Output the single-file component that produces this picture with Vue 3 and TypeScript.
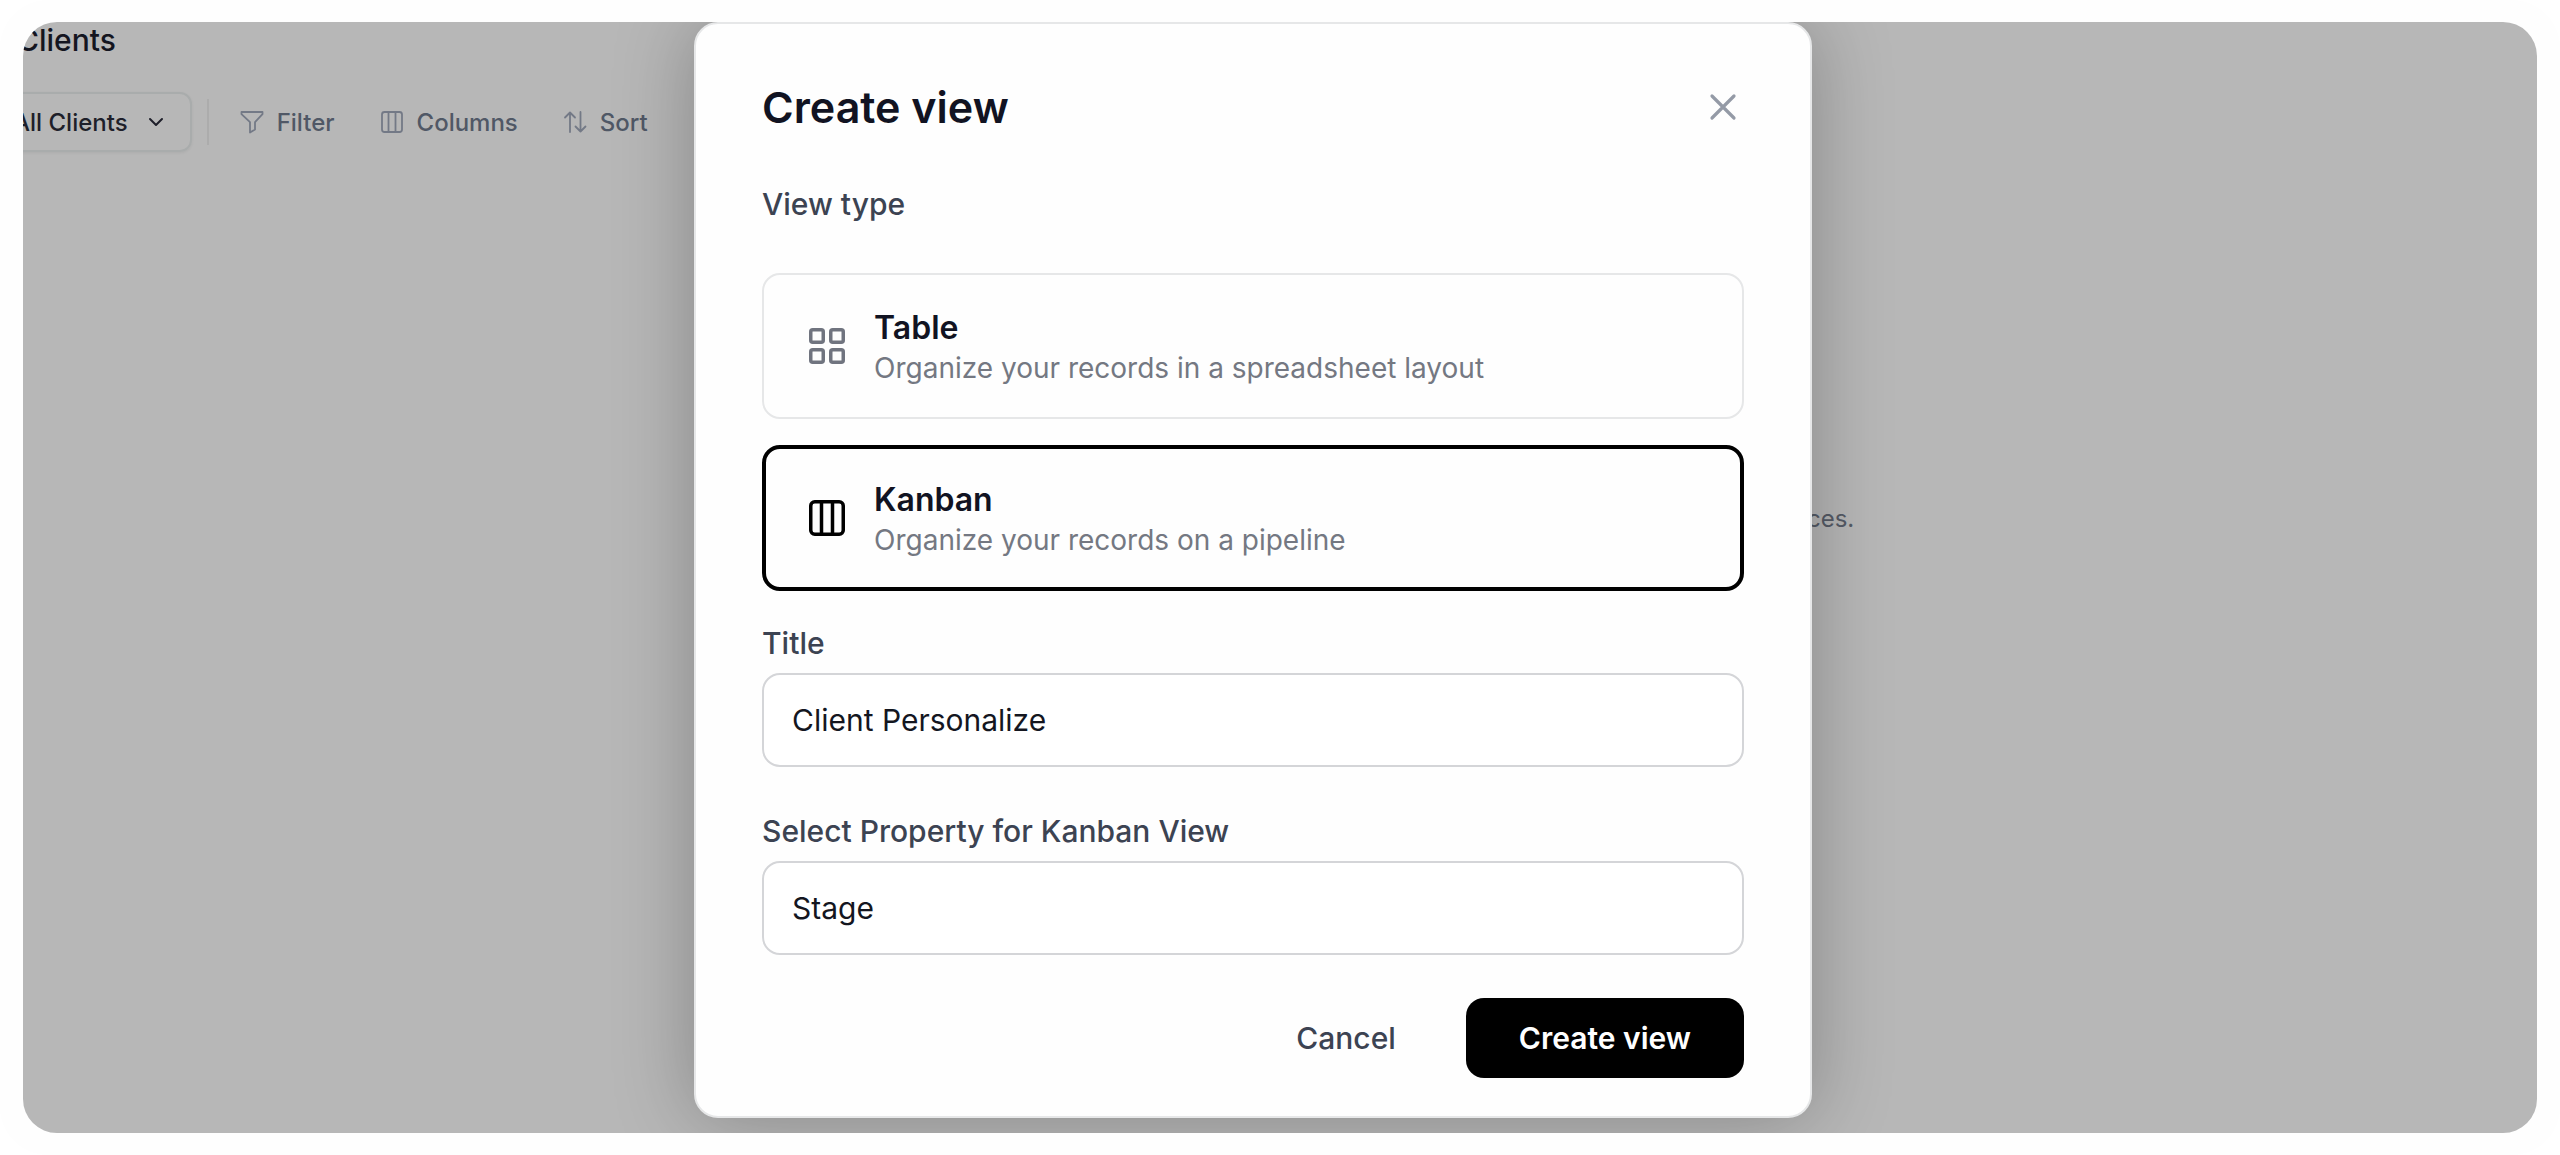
<script setup lang="ts">
import { ref } from 'vue'

type ViewType = 'table' | 'kanban'

interface ViewOption {
  id: ViewType
  name: string
  description: string
}

const options: ViewOption[] = [
  { id: 'table', name: 'Table', description: 'Organize your records in a spreadsheet layout' },
  { id: 'kanban', name: 'Kanban', description: 'Organize your records on a pipeline' },
]

const viewType = ref<ViewType>('kanban')
const title = ref('Client Personalize')
const property = ref('Stage')
</script>

<template>
  <div class="shell">
    <div class="stage">
      <main class="page">
        <h1 class="page-title">Clients</h1>
        <div class="toolbar">
          <button type="button" class="view-switch">
            All Clients
            <svg width="16" height="10" viewBox="0 0 16 10" fill="none" stroke="currentColor" stroke-width="2" stroke-linecap="round" stroke-linejoin="round" aria-hidden="true">
              <path d="M2 2l6 6 6-6" />
            </svg>
          </button>
          <span class="divider"></span>
          <button type="button" class="tool">
            <svg width="24" height="24" viewBox="0 0 24 24" fill="none" stroke="currentColor" stroke-width="1.8" stroke-linejoin="round" aria-hidden="true">
              <path d="M1.5 2h21v2.2l-7.5 8v7.3L10 22.5V12.2l-8.5-8z" />
            </svg>
            Filter
          </button>
          <button type="button" class="tool">
            <svg width="24" height="24" viewBox="0 0 24 24" fill="none" stroke="currentColor" stroke-width="1.8" aria-hidden="true">
              <rect x="2" y="2" width="20" height="20" rx="2.5" />
              <path d="M8.5 2v20M15.5 2v20" />
            </svg>
            Columns
          </button>
          <button type="button" class="tool">
            <svg width="24" height="24" viewBox="0 0 24 24" fill="none" stroke="currentColor" stroke-width="1.8" stroke-linecap="round" stroke-linejoin="round" aria-hidden="true">
              <path d="M7 22V2.5M2 7.5l5-5 5 5M17.5 2v19.5M12.5 16.5l5 5 5-5" />
            </svg>
            Sort
          </button>
        </div>
        <p class="empty-note">ces.</p>
      </main>

      <div class="overlay">
        <form class="modal" role="dialog" aria-labelledby="dialog-title" @submit.prevent>
          <header class="modal-head">
            <h2 id="dialog-title">Create view</h2>
            <button type="button" class="close" aria-label="Close">
              <svg width="28" height="28" viewBox="0 0 28 28" fill="none" stroke="currentColor" stroke-width="3.2" stroke-linecap="round" aria-hidden="true">
                <path d="M3 3l22 22M25 3L3 25" />
              </svg>
            </button>
          </header>

          <fieldset class="types">
            <legend class="label">View type</legend>
            <label
              v-for="option in options"
              :key="option.id"
              class="card"
              :class="{ selected: viewType === option.id }"
            >
              <input v-model="viewType" type="radio" name="view-type" :value="option.id" />
              <svg width="36" height="36" viewBox="0 0 36 36" fill="none" stroke="currentColor" stroke-width="3.5" aria-hidden="true">
                <template v-if="option.id === 'table'">
                  <rect x="1.75" y="1.75" width="12.5" height="12.5" rx="2" />
                  <rect x="21.75" y="1.75" width="12.5" height="12.5" rx="2" />
                  <rect x="1.75" y="21.75" width="12.5" height="12.5" rx="2" />
                  <rect x="21.75" y="21.75" width="12.5" height="12.5" rx="2" />
                </template>
                <template v-else>
                  <rect x="1.75" y="1.75" width="32.5" height="32.5" rx="4" />
                  <path d="M12.5 2v32M23.5 2v32" />
                </template>
              </svg>
              <span class="card-text">
                <span class="card-name">{{ option.name }}</span>
                <span class="card-desc">{{ option.description }}</span>
              </span>
            </label>
          </fieldset>

          <div class="field">
            <label class="label" for="view-title">Title</label>
            <input id="view-title" v-model="title" type="text" />
          </div>
          <div class="field">
            <label class="label" for="view-property">Select Property for Kanban View</label>
            <input id="view-property" v-model="property" type="text" />
          </div>

          <footer class="actions">
            <button type="button" class="cancel">Cancel</button>
            <button type="submit" class="submit">Create view</button>
          </footer>
        </form>
      </div>
    </div>
  </div>
</template>

<style>
body {
  margin: 0;
  background: #ffffff;
}
</style>

<style scoped>
.shell {
  box-sizing: border-box;
  min-height: 100vh;
  padding: 22px 23px;
  display: grid;
  border-radius: 48px;
  background: #fefefe;
  font-family: Inter, "Liberation Sans", sans-serif;
}

button,
input {
  font: inherit;
  box-sizing: border-box;
}

button {
  padding: 0;
  border: 0;
  background: none;
  cursor: pointer;
}

svg {
  flex: none;
}

.stage {
  display: grid;
  overflow: hidden;
  border-radius: 34px;
  background: #b7b7b7;
}

.page,
.overlay {
  grid-area: 1 / 1;
}

.page {
  display: grid;
  grid-template-columns: 1784fr 730fr;
  grid-template-rows: auto auto 1fr;
}

.page-title {
  grid-column: 1 / -1;
  margin: 0 0 0 -6px;
  font-size: 30px;
  line-height: 36px;
  font-weight: 500;
  color: #14151f;
}

.toolbar {
  grid-column: 1 / -1;
  display: flex;
  align-items: center;
  margin-top: 34px;
  font-size: 24px;
  font-weight: 500;
}

.view-switch {
  display: flex;
  align-items: center;
  gap: 20px;
  height: 60px;
  margin-left: -38px;
  padding: 0 26px;
  border: 2px solid #a9acac;
  border-radius: 12px;
  box-shadow: 0 1px 3px rgba(0, 0, 0, 0.06);
  color: #1e1f2a;
}

.divider {
  width: 2px;
  height: 46px;
  margin: 0 31px 0 15px;
  background: #acacac;
}

.tool {
  display: flex;
  align-items: center;
  gap: 13px;
  color: #505866;
}

.tool + .tool {
  margin-left: 45px;
}

.tool svg {
  color: #737986;
}

.empty-note {
  grid-column: 2;
  margin: 349px 0 0;
  font-size: 24px;
  line-height: 36px;
  color: #555b66;
}

.overlay {
  display: grid;
  grid-template-columns: 671fr 1118fr 725fr;
  align-items: start;
}

.modal {
  grid-column: 2;
  position: relative;
  box-sizing: border-box;
  padding: 55px 66px 38px;
  border: 2px solid #e6e7e8;
  border-radius: 24px;
  background: #fefefe;
  box-shadow: 0 0 80px rgba(0, 0, 0, 0.27);
}

.modal-head {
  display: flex;
  align-items: center;
  justify-content: space-between;
}

.modal-head h2 {
  margin: 0;
  font-size: 43px;
  line-height: 56px;
  font-weight: 600;
  color: #111322;
}

.close {
  display: flex;
  margin-right: 7px;
  color: #949aa6;
}

.label {
  display: block;
  padding: 0;
  font-size: 30px;
  line-height: 44px;
  font-weight: 500;
  color: #3c4352;
}

.types {
  display: grid;
  gap: 26px;
  min-width: 0;
  margin: 47px 0 30px;
  padding: 0;
  border: 0;
}

.types .label {
  margin-bottom: 47px;
}

.card {
  position: relative;
  display: flex;
  align-items: center;
  box-sizing: border-box;
  gap: 29px;
  height: 146px;
  padding: 0 45px;
  border: 2px solid #e6e7e8;
  border-radius: 18px;
  color: #70747f;
  cursor: pointer;
}

.card.selected {
  padding: 0 43px;
  border: 4px solid #000000;
  color: #000000;
}

.card input {
  position: absolute;
  inset: 0;
  width: 100%;
  height: 100%;
  margin: 0;
  opacity: 0;
}

.card-text {
  display: grid;
  padding-top: 4px;
}

.card-name {
  font-size: 32px;
  line-height: 40px;
  font-weight: 600;
  color: #111322;
}

.card-desc {
  font-size: 28px;
  line-height: 40px;
  color: #747882;
}

.field {
  display: grid;
  gap: 8px;
}

.field + .field {
  margin-top: 42px;
}

.field input {
  width: 100%;
  height: 94px;
  padding: 0 28px;
  border: 2px solid #d4d5d8;
  border-radius: 18px;
  background: #ffffff;
  font-size: 30px;
  color: #14161f;
}

.actions {
  display: flex;
  justify-content: flex-end;
  gap: 17px;
  margin-top: 43px;
  font-size: 30px;
}

.actions button {
  height: 80px;
  padding: 0 53px;
  border-radius: 18px;
  font-weight: 500;
}

.cancel {
  color: #3c4352;
}

.actions .submit {
  background: #000000;
  color: #ffffff;
  font-weight: 600;
}
</style>
